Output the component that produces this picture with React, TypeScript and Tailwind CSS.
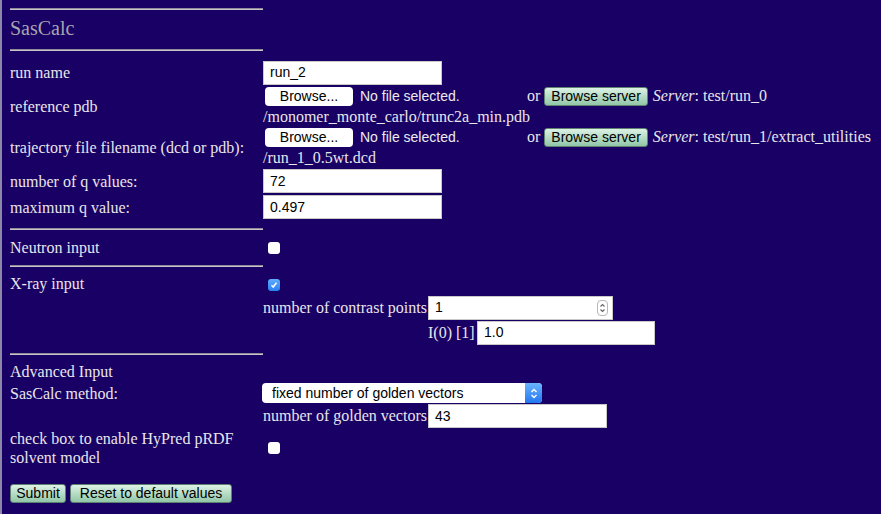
import type { ReactNode } from 'react'

const sans = "font-['Liberation_Sans',Arial,sans-serif]"

function Hr() {
  return <div className="h-[2px] w-[253px] border-t border-[#8f8a9a] border-b border-b-[#c8c4c8]" />
}

function Row({ label, h, children }: { label?: ReactNode; h: string; children?: ReactNode }) {
  return (
    <div className={`flex items-center ${h}`}>
      <div className="w-[253px] shrink-0 leading-[19px]">{label}</div>
      <div className="flex-1 flex items-center">{children}</div>
    </div>
  )
}

function TextInput({ value, w, spinner }: { value: string; w: string; spinner?: boolean }) {
  return (
    <div
      className={`${w} h-[24px] bg-white border border-[#c8c8c8] flex items-center pl-[6px] pr-[4px] text-[14px] text-black ${sans}`}
    >
      <span className="flex-1">{value}</span>
      {spinner && (
        <span className="w-[11px] h-[16px] rounded-[4px] border border-[#b8b8b8] flex flex-col items-center justify-center text-[#666]">
          <svg width="7" height="12" viewBox="0 0 7 12" fill="none" stroke="currentColor" strokeWidth="1.1">
            <path d="M1.5 4.5 L3.5 2.5 L5.5 4.5" />
            <path d="M1.5 7.5 L3.5 9.5 L5.5 7.5" />
          </svg>
        </span>
      )}
    </div>
  )
}

function MintButton({ children, w }: { children: ReactNode; w?: string }) {
  return (
    <span
      className={`${w ?? ''} inline-flex items-center justify-center h-[19px] px-[6px] rounded-[3px] border border-[#5f8270] bg-gradient-to-b from-[#dcf2e5] to-[#92c6a8] text-[14px] text-black ${sans}`}
    >
      {children}
    </span>
  )
}

function FileInput() {
  return (
    <span className={`w-[264px] shrink-0 flex items-center text-[14px] ${sans}`}>
      <span className="ml-[2px] w-[88px] h-[19px] bg-white rounded-[4px] flex items-center justify-center text-black">
        Browse...
      </span>
      <span className="ml-[7px] text-[#ececec]">No file selected.</span>
    </span>
  )
}

function Checkbox({ checked }: { checked?: boolean }) {
  return checked ? (
    <span className="ml-[5px] w-[12px] h-[12px] rounded-[3px] bg-gradient-to-b from-[#5fadff] to-[#2a7ff0] flex items-center justify-center">
      <svg width="8" height="8" viewBox="0 0 8 8" fill="none" stroke="white" strokeWidth="1.5">
        <path d="M1.5 4.3 L3.2 6 L6.5 1.8" />
      </svg>
    </span>
  ) : (
    <span className="ml-[5px] w-[12px] h-[12px] rounded-[3px] bg-white" />
  )
}

function FileRow({ label, server, path }: { label: string; server: string; path: string }) {
  return (
    <div className="flex items-center h-[41px]">
      <div className="w-[253px] shrink-0">{label}</div>
      <div className="flex-1 flex flex-col">
        <div className="h-[20px] flex items-center">
          <FileInput />
          <span>or</span>
          <span className="ml-[4px]">
            <MintButton>Browse server</MintButton>
          </span>
          <span className="ml-[5px]">
            <i>Server</i>: {server}
          </span>
        </div>
        <div className="h-[21px] flex items-center">{path}</div>
      </div>
    </div>
  )
}

export default function App() {
  return (
    <div className="min-h-screen bg-[#180064] border-l-2 border-[#8c88aa] text-[16px] text-[#e8e6ea] font-['Liberation_Serif','Times_New_Roman',serif]">
      <div className="pl-[8px] pt-[8px]">
        <Hr />
        <div className="h-[39px] pb-[3px] flex items-center text-[20px] text-[#a8a6ae]">SasCalc</div>
        <Hr />
        <div className="h-[8px]" />

        <Row label="run name" h="h-[27px]">
          <TextInput value="run_2" w="w-[179px]" />
        </Row>
        <FileRow label="reference pdb" server="test/run_0" path="/monomer_monte_carlo/trunc2a_min.pdb" />
        <FileRow
          label="trajectory file filename (dcd or pdb):"
          server="test/run_1/extract_utilities"
          path="/run_1_0.5wt.dcd"
        />
        <Row label="number of q values:" h="h-[26px]">
          <TextInput value="72" w="w-[179px]" />
        </Row>
        <Row label="maximum q value:" h="h-[26px]">
          <TextInput value="0.497" w="w-[179px]" />
        </Row>

        <div className="h-[8px]" />
        <Hr />
        <Row label="Neutron input" h="h-[35px]">
          <Checkbox />
        </Row>
        <Hr />

        <div className="flex h-[28px]">
          <div className="w-[253px] shrink-0 pt-[7px] leading-[19px]">X-ray input</div>
          <div className="pt-[12px]">
            <Checkbox checked />
          </div>
        </div>
        <Row h="h-[25px]">
          <span className="w-[165px] shrink-0">number of contrast points</span>
          <TextInput value="1" w="w-[185px]" spinner />
        </Row>
        <Row h="h-[25px]">
          <span className="w-[165px] shrink-0" />
          <span className="w-[49px] shrink-0">I(0) [1]</span>
          <TextInput value="1.0" w="w-[178px]" />
        </Row>

        <div className="h-[8px]" />
        <Hr />
        <div className="h-[28px] pt-[7px] leading-[19px]">Advanced Input</div>
        <Row label="SasCalc method:" h="h-[20px]">
          <div
            className={`-ml-[1px] w-[280px] h-[20px] bg-white rounded-[4px] flex items-center text-[14px] text-black ${sans}`}
          >
            <span className="flex-1 pl-[10px]">fixed number of golden vectors</span>
            <span className="w-[17px] h-[20px] rounded-r-[4px] bg-gradient-to-b from-[#6cb4ff] to-[#1f76ef] flex items-center justify-center">
              <svg width="8" height="13" viewBox="0 0 8 13" fill="none" stroke="white" strokeWidth="1.4">
                <path d="M1.5 5 L4 2.5 L6.5 5" />
                <path d="M1.5 8 L4 10.5 L6.5 8" />
              </svg>
            </span>
          </div>
        </Row>
        <Row h="h-[26px]">
          <span className="w-[165px] shrink-0">number of golden vectors</span>
          <TextInput value="43" w="w-[179px]" />
        </Row>
        <Row
          label={
            <>
              check box to enable HyPred pRDF
              <br />
              solvent model
            </>
          }
          h="h-[38px]"
        >
          <Checkbox />
        </Row>

        <div className="h-[17px]" />
        <div className="flex gap-[4px]">
          <MintButton w="w-[56px]">Submit</MintButton>
          <MintButton w="w-[162px]">Reset to default values</MintButton>
        </div>
      </div>
    </div>
  )
}
